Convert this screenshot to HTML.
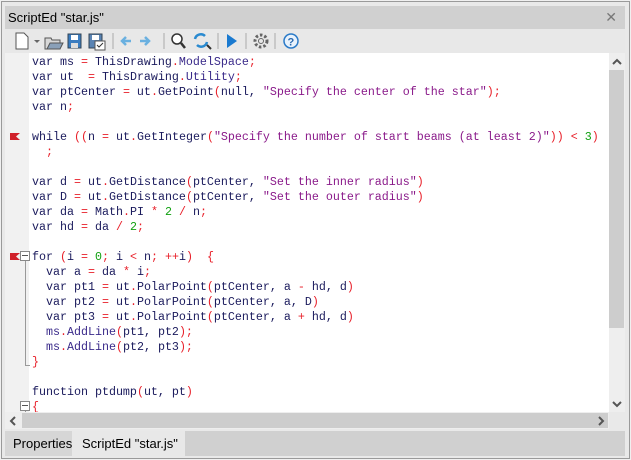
<!DOCTYPE html>
<html><head><style>
body{margin:0;width:631px;height:460px;background:#f0f0f0;position:relative;overflow:hidden;font-family:"Liberation Sans",sans-serif}
.win{position:absolute;left:1px;top:1px;width:627px;height:456px;border:1px solid #9a9a9a;background:#e9e9e9}
.title{position:absolute;left:5px;top:6px;width:620px;height:23px;background:#d0d0d0;font-size:13px;line-height:23px}
.title span{position:absolute;left:3px}
.title b{position:absolute;right:8px;top:0;font-weight:normal;color:#777;font-size:14px}
.tb{position:absolute;left:5px;top:29px;width:620px;height:24px;background:#e8e8e8}
.ed{position:absolute;left:5px;top:53px;width:604px;height:359px;background:#fff;overflow:hidden}
.gut{position:absolute;left:0;top:0;width:24px;height:359px;background:#f1f1f1}
pre{position:absolute;left:27px;top:2px;margin:0;font-family:"Liberation Mono",monospace;font-size:11.67px;line-height:15px;color:#1a1a5c}
.s{color:#8a1a8a}.o{color:#e8202a}.n{color:#10a010}.m{color:#3a2a8a}
.vs{position:absolute;left:609px;top:53px;width:16px;height:359px;background:#eeeeee}
.vt{position:absolute;left:609px;top:70px;width:15px;height:258px;background:#cdcdcd}
.hs{position:absolute;left:5px;top:412px;width:604px;height:17px;background:#eeeeee}
.ht{position:absolute;left:22px;top:413px;width:586px;height:15px;background:#cdcdcd}
.tabs{position:absolute;left:5px;top:431px;width:620px;height:25px;background:#d0d0d0;font-size:13px}
.t1{position:absolute;left:0;top:0;width:66px;height:25px;background:#d6d6d6;line-height:25px;padding-left:8px}
.t2{position:absolute;left:67px;top:0;width:103px;height:25px;background:#e8e8e8;line-height:25px;padding-left:10px}
.flag{position:absolute;left:5px;width:10px;height:7px;background:#d0202a;clip-path:polygon(0 0,100% 0,60% 50%,100% 100%,0 100%)}
.box{position:absolute;width:8px;height:8px;border:1px solid #888;background:#fff}
.box:after{content:"";position:absolute;left:1px;top:3px;width:6px;height:1px;background:#555}
.vl{position:absolute;width:1px;background:#999}
</style></head><body>
<div class="win"></div>
<div class="title"><span>ScriptEd "star.js"</span><b>✕</b></div>
<div class="tb">
<svg width="320" height="24" style="position:absolute;left:0;top:0">
<path d="M11 4h8l4 4v12H11z" fill="#fff" stroke="#555"/>
<path d="M29 11l3 3 3-3z" fill="#666"/>
<path d="M40 9h6l1 2h8v9H40z" fill="#d8d8d8" stroke="#555"/><path d="M42 20l3-6h13l-3 6z" fill="#8aa0b8" stroke="#555"/>
<rect x="63" y="5" width="13" height="14" fill="#3a7cc0" stroke="#345"/><rect x="66" y="6" width="7" height="5" fill="#fff"/><rect x="66" y="14" width="7" height="5" fill="#ddd"/>
<rect x="84" y="5" width="13" height="14" fill="#5a84b4" stroke="#345"/><rect x="87" y="6" width="7" height="5" fill="#fff"/><rect x="90" y="12" width="10" height="9" fill="#fff" stroke="#555"/><path d="M92 16l2 2 4-4" stroke="#333" fill="none"/>
<line x1="108" y1="4" x2="108" y2="20" stroke="#aaa"/>
<path d="M117 12h9M121 8l-4 4 4 4" stroke="#6ab0e0" stroke-width="2.5" fill="none"/>
<path d="M135 12h9M140 8l4 4-4 4" stroke="#6ab0e0" stroke-width="2.5" fill="none"/>
<line x1="159" y1="4" x2="159" y2="20" stroke="#aaa"/>
<circle cx="172" cy="10" r="5" fill="#fff" stroke="#333" stroke-width="1.5"/><path d="M176 14l4 5" stroke="#333" stroke-width="2.5"/>
<path d="M190 10a6 6 0 0 1 10-3M202 13a6 6 0 0 1-10 3" stroke="#2a8ad0" stroke-width="2.5" fill="none"/><path d="M202 16l4 4" stroke="#333" stroke-width="2"/>
<line x1="213" y1="4" x2="213" y2="20" stroke="#aaa"/>
<path d="M222 5l10 7-10 7z" fill="#1a7ad0"/>
<line x1="241" y1="4" x2="241" y2="20" stroke="#aaa"/>
<circle cx="256" cy="12" r="6" fill="none" stroke="#666" stroke-width="3" stroke-dasharray="2.5 2"/><circle cx="256" cy="12" r="2.5" fill="none" stroke="#666"/>
<line x1="270" y1="4" x2="270" y2="20" stroke="#aaa"/>
<circle cx="286" cy="12" r="7" fill="#e8f2fc" stroke="#2a7ac8" stroke-width="1.5"/><text x="282.5" y="16.5" font-size="11" font-weight="bold" fill="#2a6ab0" font-family="Liberation Sans">?</text>
</svg></div>
<div class="ed">
<div class="gut"></div>
<div class="flag" style="top:80px"></div>
<div class="flag" style="top:200px"></div>
<div class="box" style="left:15px;top:198px"></div>
<div class="vl" style="left:20px;top:208px;height:104px"></div>
<div style="position:absolute;left:20px;top:312px;width:5px;height:1px;background:#999"></div>
<div class="box" style="left:15px;top:348px"></div>
<div class="vl" style="left:20px;top:358px;height:2px"></div>
<pre>var ms <span class="o">=</span> ThisDrawing<span class="o">.</span><span class="m">ModelSpace</span><span class="o">;</span>
var ut  <span class="o">=</span> ThisDrawing<span class="o">.</span><span class="m">Utility</span><span class="o">;</span>
var ptCenter <span class="o">=</span> ut<span class="o">.</span>GetPoint<span class="o">(</span>null, <span class="s">"Specify the center of the star"</span><span class="o">);</span>
var n<span class="o">;</span>

while <span class="o">((</span>n <span class="o">=</span> ut<span class="o">.</span>GetInteger<span class="o">(</span><span class="s">"Specify the number of start beams (at least 2)"</span><span class="o">))</span> <span class="o">&lt;</span> <span class="n">3</span><span class="o">)</span>
  <span class="o">;</span>

var d <span class="o">=</span> ut<span class="o">.</span>GetDistance<span class="o">(</span>ptCenter, <span class="s">"Set the inner radius"</span><span class="o">)</span>
var D <span class="o">=</span> ut<span class="o">.</span>GetDistance<span class="o">(</span>ptCenter, <span class="s">"Set the outer radius"</span><span class="o">)</span>
var da <span class="o">=</span> Math<span class="o">.</span>PI <span class="o">*</span> <span class="n">2</span> <span class="o">/</span> n<span class="o">;</span>
var hd <span class="o">=</span> da <span class="o">/</span> <span class="n">2</span><span class="o">;</span>

for <span class="o">(</span>i <span class="o">=</span> <span class="n">0</span><span class="o">;</span> i <span class="o">&lt;</span> n<span class="o">;</span> <span class="o">++</span>i<span class="o">)</span>  <span class="o">{</span>
  var a <span class="o">=</span> da <span class="o">*</span> i<span class="o">;</span>
  var pt1 <span class="o">=</span> ut<span class="o">.</span>PolarPoint<span class="o">(</span>ptCenter, a <span class="o">-</span> hd, d<span class="o">)</span>
  var pt2 <span class="o">=</span> ut<span class="o">.</span>PolarPoint<span class="o">(</span>ptCenter, a, D<span class="o">)</span>
  var pt3 <span class="o">=</span> ut<span class="o">.</span>PolarPoint<span class="o">(</span>ptCenter, a <span class="o">+</span> hd, d<span class="o">)</span>
  <span class="m">ms</span><span class="o">.</span><span class="m">AddLine</span><span class="o">(</span>pt1, pt2<span class="o">);</span>
  <span class="m">ms</span><span class="o">.</span><span class="m">AddLine</span><span class="o">(</span>pt2, pt3<span class="o">);</span>
<span class="o">}</span>

function ptdump<span class="o">(</span>ut, pt<span class="o">)</span>
<span class="o">{</span></pre>
</div>
<div class="vs"></div><div class="vt"></div>
<svg style="position:absolute;left:612px;top:58px" width="10" height="8"><path d="M1 6l4-4 4 4" stroke="#555" stroke-width="2" fill="none"/></svg>
<svg style="position:absolute;left:612px;top:400px" width="10" height="8"><path d="M1 2l4 4 4-4" stroke="#555" stroke-width="2" fill="none"/></svg>
<div class="hs"></div><div class="ht"></div>
<svg style="position:absolute;left:9px;top:416px" width="8" height="10"><path d="M6 1L2 5l4 4" stroke="#555" stroke-width="2" fill="none"/></svg>
<svg style="position:absolute;left:597px;top:416px" width="8" height="10"><path d="M2 1l4 4-4 4" stroke="#555" stroke-width="2" fill="none"/></svg>
<div class="tabs"><div class="t1">Properties</div><div class="t2">ScriptEd "star.js"</div></div>
</body></html>
